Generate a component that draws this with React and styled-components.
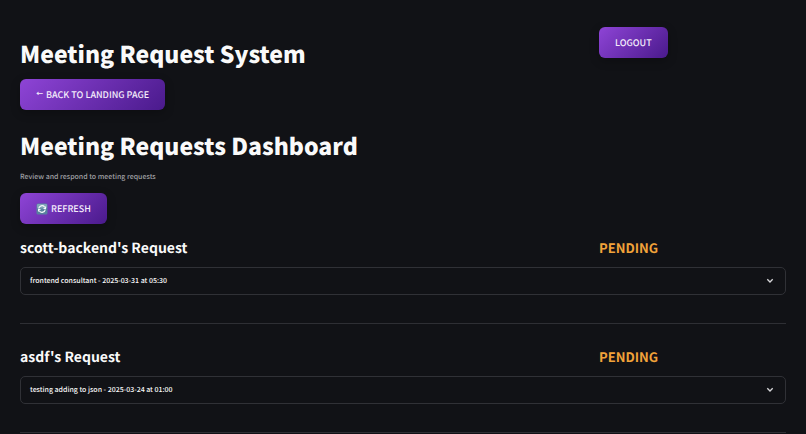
import React from 'react'
import styled, { createGlobalStyle } from 'styled-components'

const GlobalStyle = createGlobalStyle`
  *,
  *::before,
  *::after {
    box-sizing: border-box;
  }

  body {
    margin: 0;
    background: #111216;
    color: #fafafa;
    font-family: 'Source Sans Pro', 'Noto Sans CJK JP', 'Noto Sans', sans-serif;
    font-size: 7px;
    line-height: 13px;
    text-rendering: geometricPrecision;
  }
`

const Page = styled.main`
  display: flex;
  flex-direction: column;
  align-items: stretch;
  gap: 9px;
  padding: 27px 20px 0;
`

const Columns = styled.div`
  display: grid;
  grid-template-columns: 3fr 1fr;
  align-items: start;
  gap: 18px;
`

const Title = styled.h1`
  margin: 0;
  padding: 11px 0 1px;
  font-size: 23px;
  font-weight: 900;
  line-height: 31px;
`

const Caption = styled.p`
  margin: 0;
  color: #a0a1a5;
  font-weight: 500;
`

const Button = styled.button`
  display: inline-flex;
  align-items: center;
  align-self: flex-start;
  justify-self: start;
  gap: 3px;
  height: 31px;
  padding: 0 16px;
  border: 0;
  border-radius: 6px;
  background: linear-gradient(135deg, #8e44d6 0%, #4a1a8c 100%);
  box-shadow: 0 3px 10px rgba(0, 0, 0, 0.25);
  color: #f4ecfb;
  font-family: inherit;
  font-size: 9px;
  font-weight: 500;
  line-height: 13px;
  text-rendering: inherit;
  text-transform: uppercase;
  cursor: pointer;

  svg {
    width: 12px;
    height: 12px;
  }
`

const Arrow = styled.span`
  font-size: 7px;
  font-weight: 900;
`

const Request = styled.article`
  display: flex;
  flex-direction: column;
  gap: 9px;
`

const RequestTitle = styled.h3`
  margin: 0;
  padding-top: 5px;
  font-size: 14px;
  font-weight: 600;
  line-height: 20px;
`

const Status = styled.p`
  margin: 0;
  padding-top: 5px;
  color: #f2a33a;
  font-size: 13px;
  font-weight: 700;
  line-height: 20px;
  text-transform: uppercase;
`

const Expander = styled.details`
  border: 1px solid #303136;
  border-radius: 5px;

  summary {
    display: flex;
    align-items: center;
    justify-content: space-between;
    height: 26px;
    padding: 0 10px 0 9px;
    font-weight: 500;
    list-style: none;
    cursor: pointer;
  }

  svg {
    width: 10px;
    height: 10px;
  }

  &[open] svg {
    transform: rotate(180deg);
  }
`

const Divider = styled.hr`
  width: 100%;
  height: 1px;
  margin: 19px 0 9px;
  border: 0;
  background: #2e2f34;
`

const requests = [
  {
    name: 'scott-backend',
    topic: 'frontend consultant',
    date: '2025-03-31',
    time: '05:30',
    status: 'Pending',
  },
  {
    name: 'asdf',
    topic: 'testing adding to json',
    date: '2025-03-24',
    time: '01:00',
    status: 'Pending',
  },
]

const RefreshIcon = () => (
  <svg viewBox="0 0 24 24" aria-hidden="true">
    <rect x="1" y="1" width="22" height="22" rx="3" fill="#58819f" />
    <rect x="2" y="2" width="20" height="9" rx="2" fill="#7fa5b8" />
    <g fill="none" stroke="#f3f8fa" strokeWidth="2.6">
      <path d="M5.5 11a6.6 6.6 0 0 1 11.6-3.2" />
      <path d="M18.5 13a6.6 6.6 0 0 1-11.6 3.2" />
    </g>
    <path d="M20 6v6h-6z" fill="#f3f8fa" />
    <path d="M4 18v-6h6z" fill="#f3f8fa" />
  </svg>
)

const ChevronIcon = () => (
  <svg viewBox="0 0 24 24" aria-hidden="true">
    <path
      d="M5.5 8l6.5 6.5 6.5-6.5"
      fill="none"
      stroke="#d6d6d9"
      strokeWidth="3.2"
    />
  </svg>
)

function RequestItem({ name, topic, date, time, status }) {
  return (
    <Request>
      <Columns>
        <RequestTitle>{name}'s Request</RequestTitle>
        <Status>{status}</Status>
      </Columns>
      <Expander>
        <summary>
          {topic} - {date} at {time}
          <ChevronIcon />
        </summary>
      </Expander>
      <Divider />
    </Request>
  )
}

export default function App() {
  return (
    <>
      <GlobalStyle />
      <Page>
        <Columns>
          <Title>Meeting Request System</Title>
          <Button type="button">Logout</Button>
        </Columns>
        <Button type="button">
          <Arrow>←</Arrow>
          Back to Landing Page
        </Button>
        <Title as="h2">Meeting Requests Dashboard</Title>
        <Caption>Review and respond to meeting requests</Caption>
        <Button type="button">
          <RefreshIcon />
          Refresh
        </Button>
        {requests.map(request => (
          <RequestItem key={request.name} {...request} />
        ))}
      </Page>
    </>
  )
}
